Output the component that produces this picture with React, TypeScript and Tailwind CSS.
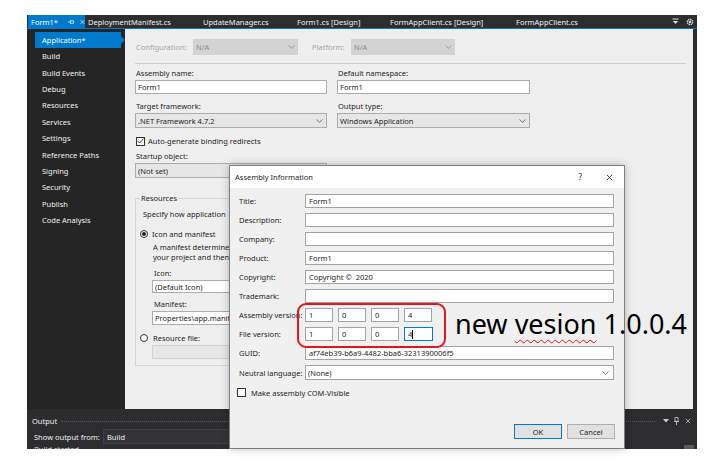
import React from 'react';

const Chevron = ({ className = '' }: { className?: string }) => (
  <svg width="7" height="4" viewBox="0 0 7 4" className={className}>
    <path d="M0.5 0.5 L3.5 3.3 L6.5 0.5" fill="none" stroke="currentColor" strokeWidth="0.8" />
  </svg>
);

const Close = ({ size = 7, className = '' }: { size?: number; className?: string }) => (
  <svg width={size} height={size} viewBox="0 0 8 8" className={className}>
    <path d="M1 1 L7 7 M7 1 L1 7" stroke="currentColor" strokeWidth="1" />
  </svg>
);

const CheckBox = ({ checked = false }: { checked?: boolean }) => (
  <span className="w-[9px] h-[9px] border border-[#333333] bg-white flex items-center justify-center shrink-0">
    {checked && (
      <svg width="7" height="6" viewBox="0 0 7 6">
        <path d="M0.6 3 L2.6 5 L6.4 0.8" fill="none" stroke="#222" strokeWidth="0.9" />
      </svg>
    )}
  </span>
);

const Radio = ({ checked = false }: { checked?: boolean }) => (
  <span className="w-[8px] h-[8px] rounded-full border border-[#333333] bg-white flex items-center justify-center shrink-0">
    {checked && <span className="w-[4px] h-[4px] rounded-full bg-[#222222]" />}
  </span>
);

const sideItems = [
  'Build',
  'Build Events',
  'Debug',
  'Resources',
  'Services',
  'Settings',
  'Reference Paths',
  'Signing',
  'Security',
  'Publish',
  'Code Analysis',
];

const dialogRows = ['Title:', 'Description:', 'Company:', 'Product:', 'Copyright:', 'Trademark:'];
const dialogValues = ['Form1', '', '', 'Form1', 'Copyright ©  2020', ''];

export default function App() {
  return (
    <div className="relative w-[716px] h-[467px] bg-white overflow-hidden font-['Noto_Sans',sans-serif] text-[7.5px] leading-[10px]">
      {/* IDE window */}
      <div className="ml-[27px] mt-[15px] w-[670px] h-[434px] bg-[#2d2d30] flex flex-col overflow-hidden">
        {/* tab strip */}
        <div className="h-[13px] flex items-center text-[#f1f1f1] shrink-0">
          <div className="ml-[1px] w-[57px] h-full bg-[#007acc] flex items-center pl-[3px] text-white">
            <span>Form1*</span>
            <svg width="7" height="6" viewBox="0 0 7 6" className="ml-[10px]">
              <path d="M0 3 H3 M3 0.8 V5.2 M3 1.5 H6.5 V4.5 H3" fill="none" stroke="white" strokeWidth="0.8" />
            </svg>
            <Close size={6} className="ml-[6px] text-white" />
          </div>
          <div className="w-[115px] pl-[3px]">DeploymentManifest.cs</div>
          <div className="w-[92px] pl-[3px]">UpdateManager.cs</div>
          <div className="w-[95px] pl-[5px]">Form1.cs [Design]</div>
          <div className="w-[126px] pl-[3px]">FormAppClient.cs [Design]</div>
          <div className="pl-[3px]">FormAppClient.cs</div>
          <div className="flex-1" />
          <svg width="7" height="7" viewBox="0 0 7 7" className="mr-[7px]">
            <path d="M0.5 1 H6.5" stroke="#e0e0e0" strokeWidth="1" />
            <path d="M0.8 3 H6.2 L3.5 6 Z" fill="#e0e0e0" />
          </svg>
          <svg width="8" height="8" viewBox="0 0 8 8" className="mr-[3px]">
            <circle cx="4" cy="4" r="2.6" fill="none" stroke="#cfcfcf" strokeWidth="1.6" strokeDasharray="1.4 0.6" />
            <circle cx="4" cy="4" r="1.2" fill="#cfcfcf" />
          </svg>
        </div>
        <div className="h-px bg-[#007acc] shrink-0" />

        {/* project properties */}
        <div className="h-[380px] flex pr-[4px] shrink-0">
          {/* side nav */}
          <div className="w-[98px] bg-[#252526] pt-[3px] text-[#f1f1f1]">
            <div className="flex items-center h-[16px] ml-[8px]">
              <div className="w-[86px] h-full bg-[#007acc] pl-[7px] flex items-center text-white">Application*</div>
              <span className="w-0 h-0 border-y-[4px] border-y-transparent border-l-[4px] border-l-[#007acc]" />
            </div>
            {sideItems.map((item) => (
              <div key={item} className="h-[16.4px] pl-[15px] flex items-center">
                {item}
              </div>
            ))}
          </div>

          {/* application page */}
          <div className="flex-1 bg-[#eeeeef] pl-[10px] pt-[10px] text-[#1e1e1e] overflow-hidden">
            <div className="flex items-center h-[16px]">
              <span className="w-[58px] pl-[1px] text-[#a6a6a6]">Configuration:</span>
              <div className="w-[105px] h-[16px] bg-[#d3d3d3] flex items-center justify-between pl-[3px] pr-[3px] text-[#8a8a8a]">
                <span>N/A</span>
                <Chevron />
              </div>
              <span className="ml-[14px] w-[39px] text-[#a6a6a6]">Platform:</span>
              <div className="w-[104px] h-[16px] bg-[#d3d3d3] flex items-center justify-between pl-[3px] pr-[3px] text-[#8a8a8a]">
                <span>N/A</span>
                <Chevron />
              </div>
            </div>
            <div className="mt-[8px] h-px w-[551px] bg-[#d0d0d0]" />

            <div className="mt-[4px] flex gap-[10px]">
              <div className="w-[192px]">
                <div className="h-[10px] pl-[1px]">Assembly name:</div>
                <div className="mt-[2px] h-[14px] bg-white border border-[#acacac] pl-[2px] flex items-center">Form1</div>
              </div>
              <div className="w-[193px]">
                <div className="h-[10px] pl-[1px]">Default namespace:</div>
                <div className="mt-[2px] h-[14px] bg-white border border-[#acacac] pl-[2px] flex items-center">Form1</div>
              </div>
            </div>

            <div className="mt-[7px] flex gap-[10px]">
              <div className="w-[192px]">
                <div className="h-[10px] pl-[1px]">Target framework:</div>
                <div className="mt-[2px] h-[15px] bg-[#e6e6e6] border border-[#acacac] pl-[2px] pr-[3px] flex items-center justify-between">
                  <span>.NET Framework 4.7.2</span>
                  <Chevron className="text-[#555]" />
                </div>
              </div>
              <div className="w-[193px]">
                <div className="h-[10px] pl-[1px]">Output type:</div>
                <div className="mt-[2px] h-[15px] bg-[#e6e6e6] border border-[#acacac] pl-[2px] pr-[3px] flex items-center justify-between">
                  <span>Windows Application</span>
                  <Chevron className="text-[#555]" />
                </div>
              </div>
            </div>

            <div className="mt-[8px] h-[10px] flex items-center gap-[3px] pl-[1px]">
              <CheckBox checked />
              <span>Auto-generate binding redirects</span>
            </div>

            <div className="mt-[5px] h-[10px] pl-[1px]">Startup object:</div>
            <div className="mt-[2px] w-[192px] h-[15px] bg-[#e6e6e6] border border-[#acacac] pl-[2px] pr-[3px] flex items-center justify-between">
              <span>(Not set)</span>
              <Chevron className="text-[#555]" />
            </div>

            {/* the part of this group right of x=229 sits under the dialog */}
            <fieldset className="mt-[15px] w-[385px] h-[173px] border border-[#d5d5d5] px-0">
              <legend className="ml-[4px] px-[1px] h-[10px]">Resources</legend>
              <div className="mt-[6px] ml-[7px] w-[86px] h-[10px] whitespace-nowrap overflow-hidden">Specify how application</div>
              <div className="mt-[10px] ml-[4px] h-[10px] flex items-center gap-[4px]">
                <Radio checked />
                <span>Icon and manifest</span>
              </div>
              <div className="mt-[3px] ml-[17px] w-[76px] whitespace-nowrap overflow-hidden">
                <div className="h-[10px]">A manifest determine</div>
                <div className="h-[10px]">your project and then</div>
              </div>
              <div className="mt-[6px] ml-[18px] h-[10px]">Icon:</div>
              <div className="mt-[2px] ml-[16px] w-[80px] h-[13px] bg-white border border-[#acacac] pl-[2px] flex items-center whitespace-nowrap overflow-hidden">(Default Icon)</div>
              <div className="mt-[6px] ml-[18px] h-[10px]">Manifest:</div>
              <div className="mt-[2px] ml-[16px] w-[80px] h-[14px] bg-white border border-[#acacac] pl-[2px] flex items-center whitespace-nowrap overflow-hidden">Properties\app.manif</div>
              <div className="mt-[8px] ml-[4px] h-[10px] flex items-center gap-[5px]">
                <Radio />
                <span>Resource file:</span>
              </div>
              <div className="mt-[2px] ml-[16px] w-[80px] h-[14px] bg-[#e6e6e6] border border-[#d2d2d2]" />
            </fieldset>
          </div>
        </div>

        {/* output window */}
        <div className="mt-[4px] h-[16px] flex items-center pl-[5px] pr-[6px] text-[#f1f1f1] shrink-0">
          <span>Output</span>
          <div className="flex-1 ml-[4px] mr-[8px] border-t border-dotted border-[#555558]" />
          <svg width="6" height="4" viewBox="0 0 6 4" className="mr-[5px]">
            <path d="M0 0 H6 L3 3.5 Z" fill="#d0d0d0" />
          </svg>
          <svg width="5" height="8" viewBox="0 0 5 8" className="mr-[6px]">
            <path d="M1 0.5 H4 V4.5 H1 Z M0 4.5 H5 M2.5 4.5 V8" fill="none" stroke="#d0d0d0" strokeWidth="0.8" />
          </svg>
          <Close size={6} className="text-[#d0d0d0]" />
        </div>
        <div className="h-[15px] flex items-center pl-[7px] text-[#f1f1f1] shrink-0">
          <span className="w-[69px]">Show output from:</span>
          <div className="w-[128px] h-full bg-[#333337] border border-[#3f3f46] pl-[3px] flex items-center">Build</div>
        </div>
        <div className="flex-1 flex">
          <span className="pl-[7px] text-[#dcdcdc] leading-[8px] pt-[1px]">Build started...</span>
          <div className="flex-1" />
          <div className="w-[10px] mt-[1px] bg-[#5a5a5e] mr-[3px]" />
        </div>
      </div>

      {/* Assembly Information dialog */}
      <div className="absolute left-[229px] top-[165px] w-[396px] h-[284px] border border-[#7d7d7d] bg-[#f0f0f0] text-[#1e1e1e] shadow-[0_0_8px_rgba(0,0,0,0.25)] flex flex-col">
        <div className="h-[22px] bg-white flex items-center pl-[5px] pr-[11px] shrink-0">
          <span className="flex-1">Assembly Information</span>
          <span className="mr-[24px] text-[8px]">?</span>
          <Close size={7} className="text-[#333]" />
        </div>
        <div className="pt-[6px] pl-[9px] flex flex-col gap-[5px]">
          {dialogRows.map((label, i) => (
            <div key={label} className="flex items-center h-[14px]">
              <span className="w-[66px]">{label}</span>
              <div className="w-[309px] h-full bg-white border border-[#a3a3a3] pl-[3px] flex items-center whitespace-pre">{dialogValues[i]}</div>
            </div>
          ))}
          {['Assembly version:', 'File version:'].map((label, r) => (
            <div key={label} className="flex items-center h-[14px]">
              <span className="w-[66px] whitespace-nowrap overflow-hidden">{label}</span>
              <div className="flex gap-[5px] h-full">
                {['1', '0', '0', '4'].map((v, i) => {
                  const focused = r === 1 && i === 3;
                  return (
                    <div
                      key={i}
                      className={
                        focused
                          ? 'w-[29px] h-full bg-white border border-[#0078d7] pl-[3px] flex items-center'
                          : 'w-[28px] h-full bg-white border border-[#a3a3a3] pl-[3px] flex items-center'
                      }
                    >
                      {v}
                      {focused && <span className="w-px h-[9px] bg-black" />}
                    </div>
                  );
                })}
              </div>
            </div>
          ))}
          <div className="flex items-center h-[14px]">
            <span className="w-[66px]">GUID:</span>
            <div className="w-[309px] h-full bg-white border border-[#a3a3a3] pl-[3px] flex items-center">af74eb39-b6a9-4482-bba6-3231390006f5</div>
          </div>
          <div className="flex items-center h-[15px]">
            <span className="w-[66px] whitespace-nowrap">Neutral language:</span>
            <div className="w-[309px] h-full bg-white border border-[#a3a3a3] pl-[2px] pr-[4px] flex items-center justify-between">
              <span>(None)</span>
              <Chevron className="text-[#555]" />
            </div>
          </div>
        </div>
        <div className="mt-[8px] ml-[7px] h-[9px] flex items-center gap-[5px]">
          <CheckBox />
          <span>Make assembly COM-Visible</span>
        </div>
        <div className="mt-[27px] flex justify-end gap-[5px] pr-[9px]">
          <button className="w-[48px] h-[15px] bg-[#e1e1e1] border-[1.5px] border-[#0078d7] flex items-center justify-center">OK</button>
          <button className="w-[48px] h-[15px] bg-[#e1e1e1] border border-[#adadad] flex items-center justify-center">Cancel</button>
        </div>
      </div>

      {/* annotation */}
      <div className="absolute left-[297px] top-[303px] w-[149px] h-[45px] border-[2.5px] border-[#e3141b] rounded-[9px]" />
      <div className="absolute left-[455px] top-[310px] text-[27px] leading-none text-black whitespace-nowrap font-['Noto_Sans',sans-serif]">
        new <span className="underline decoration-wavy decoration-[#e3141b] decoration-[1px] underline-offset-[5px]">vesion</span> 1.0.0.4
      </div>
    </div>
  );
}
